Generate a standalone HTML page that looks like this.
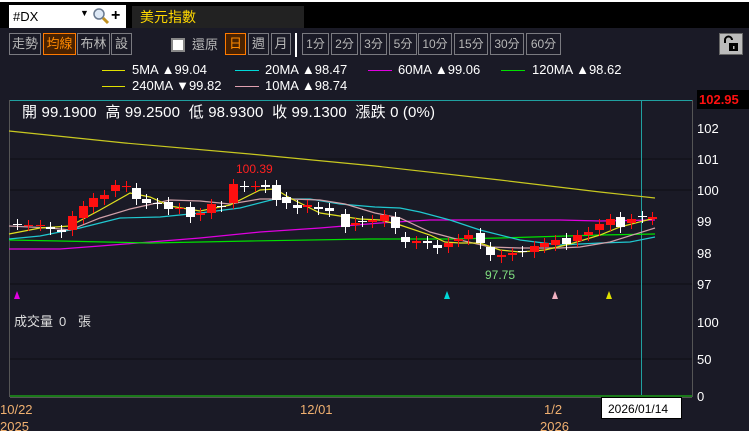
<!DOCTYPE html>
<html><head><meta charset="utf-8"><style>
*{margin:0;padding:0;box-sizing:border-box}
body{width:749px;height:431px;background:#1a1a26;overflow:hidden;position:relative;font-family:"Liberation Sans","Noto Sans CJK TC",sans-serif;}
.abs{position:absolute}
.btn{position:absolute;top:33px;height:22px;border:1px solid #7a7a80;color:#b8b8b8;font-size:13px;line-height:20px;text-align:center;}
.on{border-color:#ff7a00;background:#4a2200;color:#ff8a00}
</style></head><body>
<div class="abs" style="left:0;top:0;width:749px;height:2px;background:#fff"></div>
<div class="abs" style="left:0;top:2px;width:749px;height:26px;background:#000"></div>
<div class="abs" style="left:9px;top:5px;width:117px;height:23px;background:#fff;font-size:13px;line-height:23px;padding-left:4px;color:#000">#DX</div>
<div class="abs" style="left:80px;top:8px;font-size:9px;color:#000">▼</div>
<svg class="abs" style="left:92px;top:7px" width="18" height="18"><circle cx="7" cy="7" r="5" fill="#dde8f5" stroke="#6a7a90" stroke-width="1.5"/><line x1="11" y1="11" x2="16" y2="16" stroke="#c09020" stroke-width="3"/></svg>
<div class="abs" style="left:111px;top:5px;font-size:16px;font-weight:bold;color:#000;line-height:22px">+</div>
<div class="abs" style="left:132px;top:6px;width:172px;height:22px;background:#222;color:#ffd800;font-size:14px;line-height:22px;padding-left:8px">美元指數</div>

<div class="btn" style="left:9px;width:32px">走勢</div>
<div class="btn on" style="left:43px;width:33px">均線</div>
<div class="btn" style="left:77px;width:33px">布林</div>
<div class="btn" style="left:111px;width:21px">設</div>
<div class="abs" style="left:171px;top:38px;width:14px;height:14px;background:#fff;border:2px solid #888"></div>
<div class="abs" style="left:192px;top:35px;color:#b8b8b8;font-size:13px;line-height:20px">還原</div>
<div class="btn on" style="left:225px;width:21px">日</div>
<div class="btn" style="left:248px;width:21px">週</div>
<div class="btn" style="left:271px;width:20px">月</div>
<div class="abs" style="left:295px;top:33px;width:2px;height:24px;background:#fff"></div>
<div class="btn" style="left:302px;width:27px;font-size:12px">1分</div>
<div class="btn" style="left:331px;width:27px;font-size:12px">2分</div>
<div class="btn" style="left:360px;width:27px;font-size:12px">3分</div>
<div class="btn" style="left:389px;width:28px;font-size:12px">5分</div>
<div class="btn" style="left:418px;width:34px;font-size:12px">10分</div>
<div class="btn" style="left:454px;width:34px;font-size:12px">15分</div>
<div class="btn" style="left:490px;width:34px;font-size:12px">30分</div>
<div class="btn" style="left:526px;width:35px;font-size:12px">60分</div>
<div class="abs" style="left:719px;top:33px;width:24px;height:22px;background:#bbb;border:1px solid #666"></div>
<svg class="abs" style="left:722px;top:35px" width="18" height="18"><path d="M3 8 V5 a3.5 3.5 0 0 1 7 0" fill="none" stroke="#000" stroke-width="2"/><rect x="7" y="8" width="9" height="8" fill="#000"/><rect x="11" y="11" width="1.5" height="3" fill="#bbb"/></svg>

<div class="abs" style="top:62px;left:0;width:749px;font-size:13px;color:#fff;line-height:16px">
<div class="abs" style="left:102px;top:8px;width:23px;height:1px;background:#e0e000"></div><div class="abs" style="left:132px">5MA ▲99.04</div>
<div class="abs" style="left:235px;top:8px;width:24px;height:1px;background:#00d8d8"></div><div class="abs" style="left:265px">20MA ▲98.47</div>
<div class="abs" style="left:368px;top:8px;width:24px;height:1px;background:#e000e0"></div><div class="abs" style="left:398px">60MA ▲99.06</div>
<div class="abs" style="left:501px;top:8px;width:24px;height:1px;background:#00e000"></div><div class="abs" style="left:532px">120MA ▲98.62</div>
<div class="abs" style="left:102px;top:24px;width:23px;height:1px;background:#e0e000"></div><div class="abs" style="left:132px;top:16px">240MA ▼99.82</div>
<div class="abs" style="left:235px;top:24px;width:24px;height:1px;background:#e0a0b0"></div><div class="abs" style="left:265px;top:16px">10MA ▲98.74</div>
</div>
<div class="abs" style="left:697px;top:90px;width:52px;height:19px;background:#000;color:#ff1010;font-weight:bold;font-size:13px;line-height:19px;padding-left:2px">102.95</div>

<svg class="abs" style="left:0;top:0" width="749" height="431">
<line x1="9" y1="100.5" x2="692" y2="100.5" stroke="#20a0a0"/>
<line x1="9.5" y1="100" x2="9.5" y2="397" stroke="#555"/>
<line x1="692.5" y1="100" x2="692.5" y2="397" stroke="#555"/>
<g stroke="#0e0e14"><line x1="10" y1="159" x2="692" y2="159"/><line x1="10" y1="190" x2="692" y2="190"/><line x1="10" y1="284" x2="692" y2="284"/><line x1="10" y1="359" x2="692" y2="359"/></g>
<line x1="641.5" y1="100" x2="641.5" y2="397" stroke="#20a0a0"/>
<line x1="10" y1="396" x2="692" y2="396" stroke="#1a7a1a" stroke-width="2"/>
<line x1="10" y1="397.5" x2="692" y2="397.5" stroke="#555"/>
<g fill="none" stroke-width="1.2">
<polyline stroke="#c8c820" points="9,131 125,143 250,154 375,166 500,180 600,192 655,198"/>
<polyline stroke="#e000e0" points="9,249 60,249 100,246 150,242 200,238 260,232 320,228 380,223 430,220 500,220 560,220 600,221 655,220"/>
<polyline stroke="#00e000" points="9,240 60,241 150,243 250,241 370,239 450,239 500,238 600,235 655,234"/>
<polyline stroke="#20c8d0" points="9,239 40,236 80,228 120,218 160,217 200,213 240,208 275,199 310,199 340,204 375,207 400,208 420,212 450,220 480,230 520,240 560,245 600,243 630,242 655,237"/>
<polyline stroke="#d0a0a8" points="9,226 50,228 70,230 100,218 130,209 170,200 200,201 230,204 260,199 290,199 320,200 345,204 375,213 400,218 430,232 460,240 490,247 520,248 560,248 580,247 610,242 655,228"/>
<polyline stroke="#e0e020" points="9,234 40,228 70,226 100,210 130,193 150,197 170,206 200,211 230,205 260,190 275,189 290,198 320,213 360,219 380,220 400,225 430,235 445,242 460,243 480,243 500,250 520,252 545,250 570,244 600,235 620,227 655,218"/>
</g>
<g id="c"></g>
<text x="236" y="173" fill="#ff2020" font-size="12" font-family="Liberation Sans">100.39</text>
<text x="485" y="279" fill="#80e080" font-size="12" font-family="Liberation Sans">97.75</text>
<polygon points="14,299 17,291 20,299" fill="#e000e0"/>
<polygon points="444,299 447,291 450,299" fill="#00d8d8"/>
<polygon points="552,299 555,291 558,299" fill="#f0b0c0"/>
<polygon points="606,299 609,291 612,299" fill="#e0e000"/>
<g fill="#fff" font-size="13" font-family="Liberation Sans">
<text x="697" y="133">102</text><text x="697" y="164">101</text><text x="697" y="195">100</text><text x="697" y="226">99</text><text x="697" y="258">98</text><text x="697" y="289">97</text>
<text x="697" y="327">100</text><text x="697" y="364">50</text><text x="697" y="401">0</text>
</g>
<g fill="#ddd" font-size="13" font-family="Liberation Sans,Noto Sans CJK TC">
<text x="14" y="326">成交量</text><text x="59" y="326">0</text><text x="78" y="326">張</text>
</g>
<g fill="#f0b070" font-size="13" font-family="Liberation Sans">
<text x="0" y="414">10/22</text><text x="0" y="431">2025</text><text x="300" y="414">12/01</text><text x="544" y="414">1/2</text><text x="540" y="431">2026</text>
</g>
<rect x="601.5" y="397.5" width="80" height="21" fill="#fff" stroke="#000"/>
<text x="608" y="413" fill="#000" font-size="12" font-family="Liberation Sans">2026/01/14</text>
<text x="22" y="117" fill="#fff" font-size="15" font-family="Liberation Sans,Noto Sans CJK TC" textLength="413" xml:space="preserve">開 99.1900  高 99.2500  低 98.9300  收 99.1300  漲跌 0 (0%)</text>
</svg>
<script>
var d=[[17,'w',224,224],[28,'r',225,225],[40,'r',225,225],[50,'w',227,229],[61,'w',230,232],[72,'r',216,230],[83,'r',206,218],[93,'r',198,207],[104,'r',195,199],[115,'r',185,191],[126,'r',186,186],[136,'w',188,199],[146,'w',199,203],[157,'w',203,203],[168,'w',202,209],[179,'r',208,208],[190,'w',207,217],[200,'r',213,215],[211,'r',204,213],[221,'w',206,206],[233,'r',184,203],[244,'w',186,186],[255,'r',186,186],[265,'w',185,187],[276,'w',185,200],[286,'w',197,203],[297,'w',205,208],[307,'r',205,207],[318,'w',207,209],[329,'w',208,211],[345,'w',214,227],[355,'r',223,225],[362,'w',221,221],[372,'r',220,222],[384,'r',215,221],[395,'w',217,228],[405,'w',237,242],[416,'r',241,243],[427,'w',241,243],[437,'w',245,248],[448,'r',243,247],[458,'r',239,241],[468,'r',235,239],[480,'w',233,243],[490,'w',247,255],[501,'r',255,257],[512,'r',253,255],[522,'w',251,251],[534,'r',246,252],[544,'r',243,247],[555,'r',240,245],[566,'w',238,244],[577,'r',235,241],[588,'r',232,235],[599,'r',224,230],[610,'r',219,225],[620,'w',217,227],[631,'r',219,223],[642,'w',216,217],[652,'r',217,219]];
var s='';d.forEach(function(c){var col=c[1]=='r'?'#ff1010':'#fff';var h=Math.max(1,c[3]-c[2]);s+='<line x1="'+(c[0]+.5)+'" y1="'+(c[2]-5)+'" x2="'+(c[0]+.5)+'" y2="'+(c[3]+6)+'" stroke="'+col+'"/><rect x="'+(c[0]-4)+'" y="'+c[2]+'" width="9" height="'+h+'" fill="'+col+'"/>';});
document.getElementById('c').innerHTML=s;
</script>
</body></html>
